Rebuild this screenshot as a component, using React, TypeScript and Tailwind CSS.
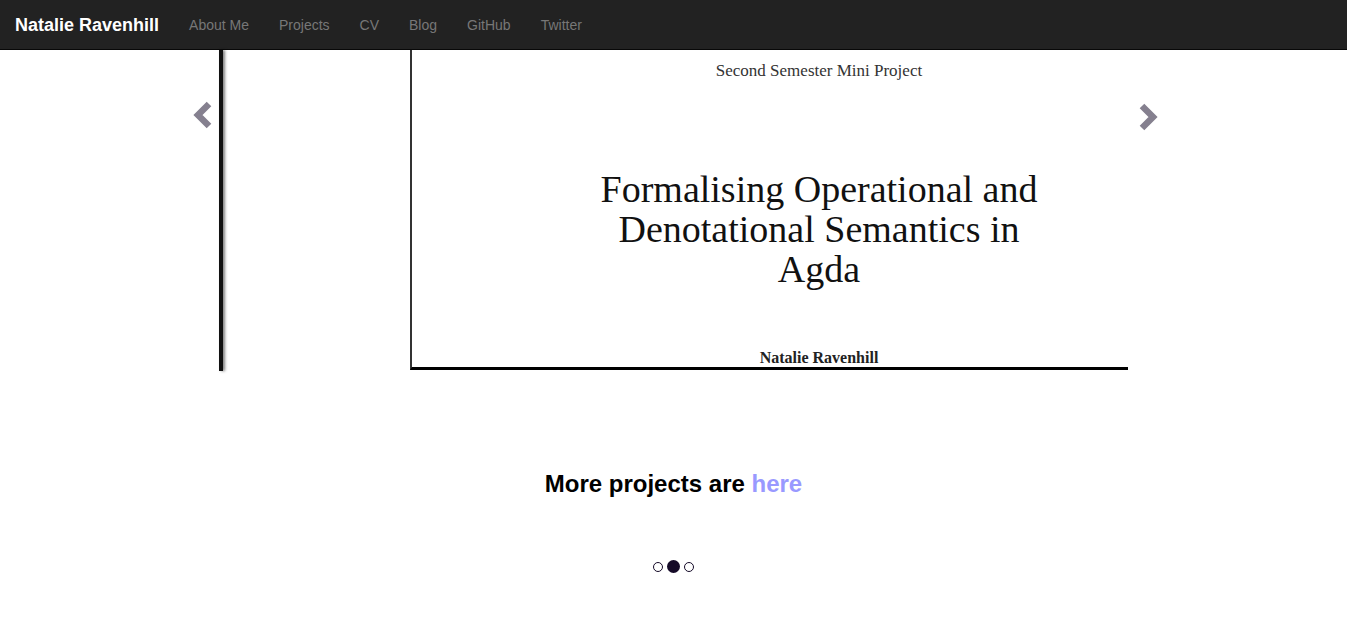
import React from 'react';

const navLinks = ['About Me', 'Projects', 'CV', 'Blog', 'GitHub', 'Twitter'];

const Chevron = ({ dir }: { dir: 'left' | 'right' }) => (
  <svg width="24" height="30" viewBox="0 0 24 30">
    <polyline
      points={dir === 'left' ? '18,4 7,15 18,26' : '6,4 17,15 6,26'}
      fill="none"
      stroke="#85808f"
      strokeWidth="6.5"
      strokeLinecap="butt"
      strokeLinejoin="miter"
    />
  </svg>
);

export default function App() {
  return (
    <div className="min-h-screen bg-white" style={{ fontFamily: '"Liberation Sans", Arial, sans-serif' }}>
      {/* Navbar */}
      <nav className="h-[50px] bg-[#222] border-b border-[#080808] flex items-center">
        <a className="px-[15px] text-[18px] font-bold text-white leading-[20px]">Natalie Ravenhill</a>
        <ul className="flex">
          {navLinks.map((l) => (
            <li key={l} className="px-[15px] text-[14px] text-[#777] leading-[20px]">
              {l}
            </li>
          ))}
        </ul>
      </nav>

      {/* Carousel */}
      <div className="relative h-[321px]">
        <div className="mx-auto w-[909px] h-full flex bg-white">
          <div className="w-[4px] h-full bg-[#111] shadow-[2px_0_3px_rgba(0,0,0,0.5)]" />
          <div className="w-[187px]" />
          <div className="flex-1 h-[320px] overflow-hidden border-l-2 border-[#333] border-b-[3px] border-b-black">
            <div
              className="w-[814px] flex flex-col items-center text-[#111]"
              style={{ fontFamily: '"Liberation Serif", "Times New Roman", serif' }}
            >
              <div className="mt-[10px] text-[17px] leading-[22px] text-[#333]">Second Semester Mini Project</div>
              <div className="mt-[87px] text-[38px] leading-[40px] text-center w-[470px]">
                Formalising Operational and Denotational Semantics in Agda
              </div>
              <div className="mt-[59px] text-[16px] font-bold leading-[20px] text-[#222]">Natalie Ravenhill</div>
            </div>
          </div>
        </div>
        <div className="absolute left-[191px] top-[50px]">
          <Chevron dir="left" />
        </div>
        <div className="absolute left-[1136px] top-[52px]">
          <Chevron dir="right" />
        </div>
      </div>

      {/* More projects */}
      <div className="mt-[99px] text-center text-[24px] font-bold leading-[28px] text-black">
        More projects are <a className="text-[#99f]">here</a>
      </div>

      {/* Indicators */}
      <div className="mt-[62px] flex justify-center items-center gap-[4px]">
        <span className="w-[10px] h-[10px] rounded-full border border-[#150a28]" />
        <span className="w-[13px] h-[13px] rounded-full bg-[#150a28]" />
        <span className="w-[10px] h-[10px] rounded-full border border-[#150a28]" />
      </div>
    </div>
  );
}
